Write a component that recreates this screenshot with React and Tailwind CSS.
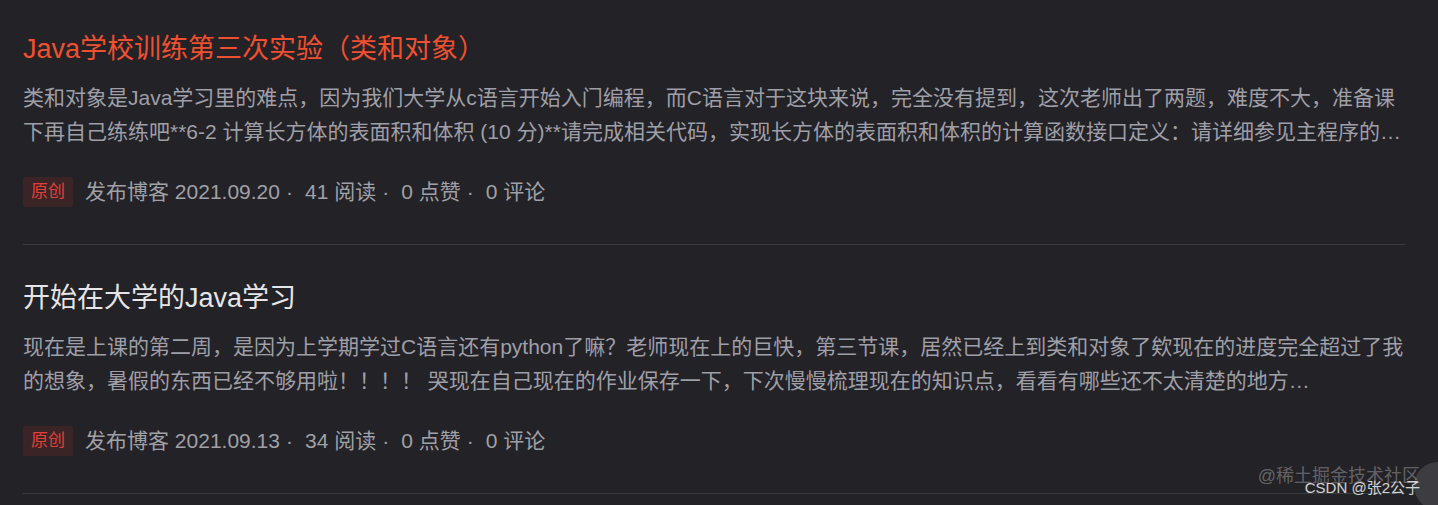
import React from 'react';

const posts = [
    {
        title: 'Java学校训练第三次实验（类和对象）',
        hot: true,
        lines: [
            '类和对象是Java学习里的难点，因为我们大学从c语言开始入门编程，而C语言对于这块来说，完全没有提到，这次老师出了两题，难度不大，准备课',
            '下再自己练练吧**6-2 计算长方体的表面积和体积 (10 分)**请完成相关代码，实现长方体的表面积和体积的计算函数接口定义：请详细参见主程序的…',
        ],
        date: '2021.09.20',
        views: 41,
        likes: 0,
        comments: 0,
    },
    {
        title: '开始在大学的Java学习',
        hot: false,
        lines: [
            '现在是上课的第二周，是因为上学期学过C语言还有python了嘛？老师现在上的巨快，第三节课，居然已经上到类和对象了欸现在的进度完全超过了我',
            '的想象，暑假的东西已经不够用啦！！！！ 哭现在自己现在的作业保存一下，下次慢慢梳理现在的知识点，看看有哪些还不太清楚的地方…',
        ],
        date: '2021.09.13',
        views: 34,
        likes: 0,
        comments: 0,
    },
];

function Dot() {
    return <span className="ml-[6px] mr-[12px]">·</span>;
}

function PostItem({ post }) {
    return (
        <div className="pt-[35px] first:pt-[31px] pb-[37px] border-b border-[#3a3a3f]">
            <h2
                className={`text-[27px] leading-[36px] whitespace-nowrap ${post.hot ? 'text-[#f0502f]' : 'text-[#e6e6e8]'}`}
            >
                {post.title}
            </h2>
            <div className="mt-[14px] text-[21px] leading-[34px] text-[#9f9fa7]">
                {post.lines.map((line, i) => (
                    <div key={i} className="whitespace-nowrap overflow-hidden">{line}</div>
                ))}
            </div>
            <div className="mt-[28px] flex items-center h-[30px] text-[21px] text-[#a0a0a7] whitespace-nowrap">
                <span className="h-[30px] px-[8px] mr-[12px] flex items-center text-[17px] text-[#e0403a] bg-[#3a2426] rounded-[2px]">
                    原创
                </span>
                <span>发布博客 {post.date}</span>
                <Dot />
                <span>{post.views} 阅读</span>
                <Dot />
                <span>{post.likes} 点赞</span>
                <Dot />
                <span>{post.comments} 评论</span>
            </div>
        </div>
    );
}

export default function App() {
    return (
        <div className="relative h-[505px] overflow-hidden bg-[#232227] font-['Liberation_Sans','Noto_Sans_CJK_SC',sans-serif]">
            <div className="pl-[23px] pr-[33px]">
                {posts.map(p => (
                    <PostItem key={p.date} post={p} />
                ))}
            </div>

            {/* watermark + floating button */}
            <div className="absolute right-[-24px] top-[462px] w-[48px] h-[48px] rounded-full bg-[#3c3c41]" />
            <div className="absolute right-[18px] top-[464px] text-[18px] leading-[24px] text-white/30 whitespace-nowrap">
                @稀土掘金技术社区
            </div>
            <div className="absolute right-[18px] top-[477px] text-[15px] leading-[22px] text-white/80 whitespace-nowrap">
                CSDN @张2公子
            </div>
        </div>
    );
}
